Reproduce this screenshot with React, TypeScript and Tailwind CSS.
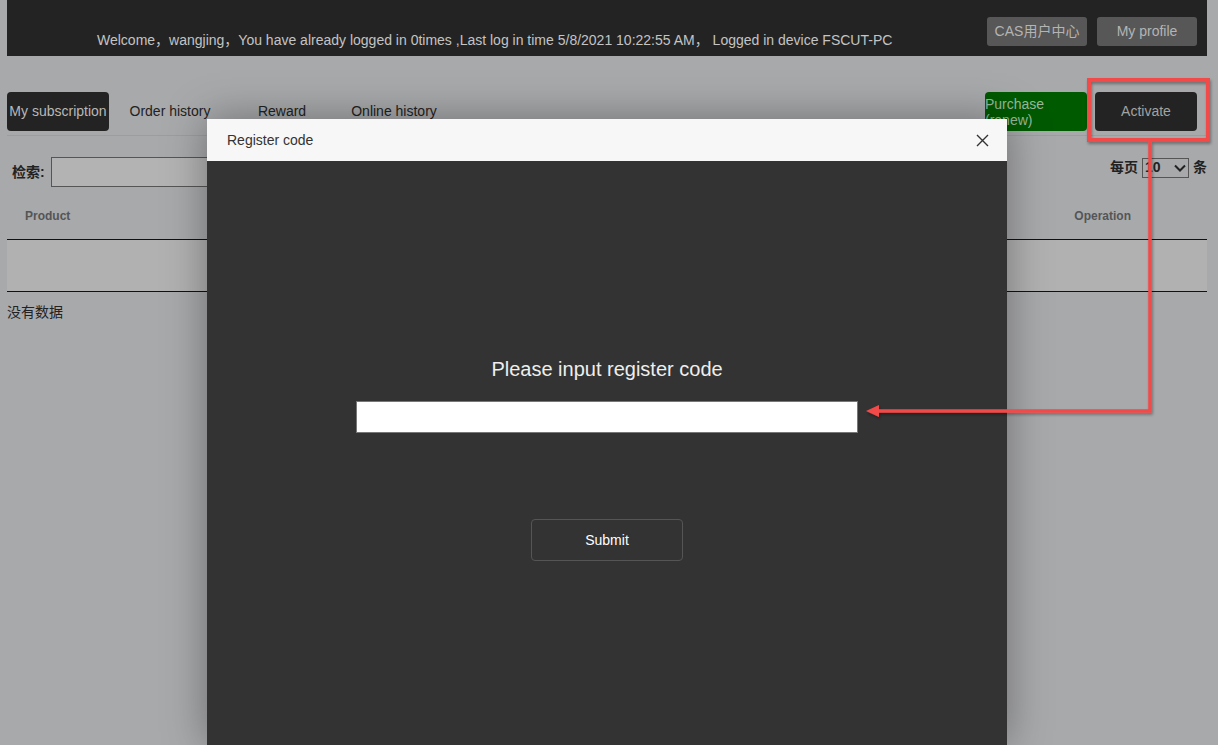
import React from 'react';

const tabs = [ 'My subscription', 'Order history', 'Reward', 'Online history' ];

const Header: React.FC = () => (
    <div className="h-[56px] bg-[#232323] flex items-start">
        <div className="pl-[90px] pt-[32px] text-[14px] leading-[16px] text-[#c4c4c4] whitespace-nowrap">
            Welcome，wangjing，You have already logged in 0times ,Last log in time 5/8/2021 10:22:55 AM， Logged in device FSCUT-PC
        </div>
        <div className="ml-auto flex gap-[10px] pt-[17px] pr-[10px]">
            <button className="w-[100px] h-[29px] rounded-[3px] bg-[#575757] text-[14px] text-[#b4b4b4]">
                CAS用户中心
            </button>
            <button className="w-[100px] h-[29px] rounded-[3px] bg-[#575757] text-[14px] text-[#b4b4b4]">
                My profile
            </button>
        </div>
    </div>
);

const Toolbar: React.FC = () => (
    <div className="mt-[36px] flex items-start border-b border-[#9c9da0] pb-[4px]">
        <div className="flex gap-[10px]">
            { tabs.map( ( t, i ) => (
                <div
                    key={ t }
                    className={
                        i === 0
                            ? 'w-[102px] h-[39px] rounded-[4px] bg-[#232323] text-[#b8b8b8] text-[14px] flex items-center justify-center'
                            : 'w-[102px] h-[39px] text-[#222] text-[14px] flex items-center justify-center'
                    }
                >
                    { t }
                </div>
            ) ) }
        </div>
        <div className="ml-auto flex gap-[8px] pr-[10px]">
            <div className="w-[102px] h-[39px] rounded-[4px] bg-[#005a00] text-[#9ab89a] text-[14px] leading-[16px] pt-[4px]">
                Purchase (renew)
            </div>
            <div className="w-[102px] h-[39px] rounded-[4px] bg-[#232323] text-[#a2a2a2] text-[14px] flex items-center justify-center">
                Activate
            </div>
        </div>
    </div>
);

const TableArea: React.FC = () => (
    <div>
        <div className="mt-[21px] flex items-center h-[30px]">
            <span className="ml-[5px] text-[14px] font-bold text-[#222]">检索:</span>
            <div className="ml-[6px] w-[260px] h-[30px] border border-[#555] bg-[#b3b3b3]" />
            <div className="ml-auto flex items-center self-start text-[14px] font-bold text-[#222]">
                <span>每页</span>
                <div className="ml-[4px] w-[47px] h-[20px] border border-[#555] flex items-center justify-between px-[2px] text-[14px]">
                    <span>10</span>
                    <svg width="12" height="8" viewBox="0 0 12 8">
                        <path d="M1 1.5 L6 6.5 L11 1.5" stroke="#222" strokeWidth="2" fill="none" />
                    </svg>
                </div>
                <span className="ml-[4px]">条</span>
            </div>
        </div>
        <div className="mt-[8px] h-[45px] flex items-center justify-between border-b border-[#111] px-[18px] pb-[2px] text-[12px] font-bold text-[#555]">
            <span>Product</span>
            <span className="mr-[58px]">Operation</span>
        </div>
        <div className="h-[52px] bg-[#b1b1b1] border-b border-[#111]" />
        <div className="mt-[10px] text-[14px] text-[#222]">没有数据</div>
    </div>
);

const Modal: React.FC = () => (
    <div className="absolute left-[207px] top-[119px] w-[800px] bottom-0 flex flex-col shadow-[0_0_40px_rgba(0,0,0,0.35)]">
        <div className="h-[42px] bg-[#f7f7f7] flex items-center justify-between pl-[20px] pr-[18px]">
            <span className="text-[14px] text-[#333]">Register code</span>
            <svg width="13" height="13" viewBox="0 0 13 13">
                <path d="M1 1 L12 12 M12 1 L1 12" stroke="#333" strokeWidth="1.4" />
            </svg>
        </div>
        <div className="flex-1 bg-[#333333] flex flex-col items-center">
            <div className="mt-[195px] text-[20px] leading-[26px] text-[#eeeeee]">
                Please input register code
            </div>
            <input className="mt-[19px] w-[502px] h-[32px] bg-white border border-[#777] outline-none" />
            <button className="mt-[86px] w-[152px] h-[42px] rounded-[4px] border border-[#555] text-[14px] text-white">
                Submit
            </button>
        </div>
    </div>
);

const Annotation: React.FC = () => (
    <svg className="absolute left-0 top-0 pointer-events-none" width="1218" height="745">
        <defs>
            <filter id="sh" x="-10%" y="-10%" width="120%" height="120%">
                <feDropShadow dx="1" dy="2" stdDeviation="1.5" floodColor="#000" floodOpacity="0.35" />
            </filter>
        </defs>
        <g filter="url(#sh)" stroke="#f24a4a" fill="none">
            <rect x="1089" y="80" width="119" height="60" strokeWidth="4" />
            <polyline points="1150,142 1150,411 876,411" strokeWidth="3.5" />
            <polygon points="866,411 879,405 879,417" fill="#f24a4a" stroke="none" />
        </g>
    </svg>
);

export default function App() {
    return (
        <div
            className="relative w-[1218px] h-[745px] overflow-hidden bg-[#a8a9ab]"
            style={ { fontFamily: '"Liberation Sans", Arial, "Noto Sans CJK SC", sans-serif' } }
        >
            <div className="ml-[7px] w-[1200px]">
                <Header />
                <Toolbar />
                <TableArea />
            </div>
            <Modal />
            <Annotation />
        </div>
    );
}
